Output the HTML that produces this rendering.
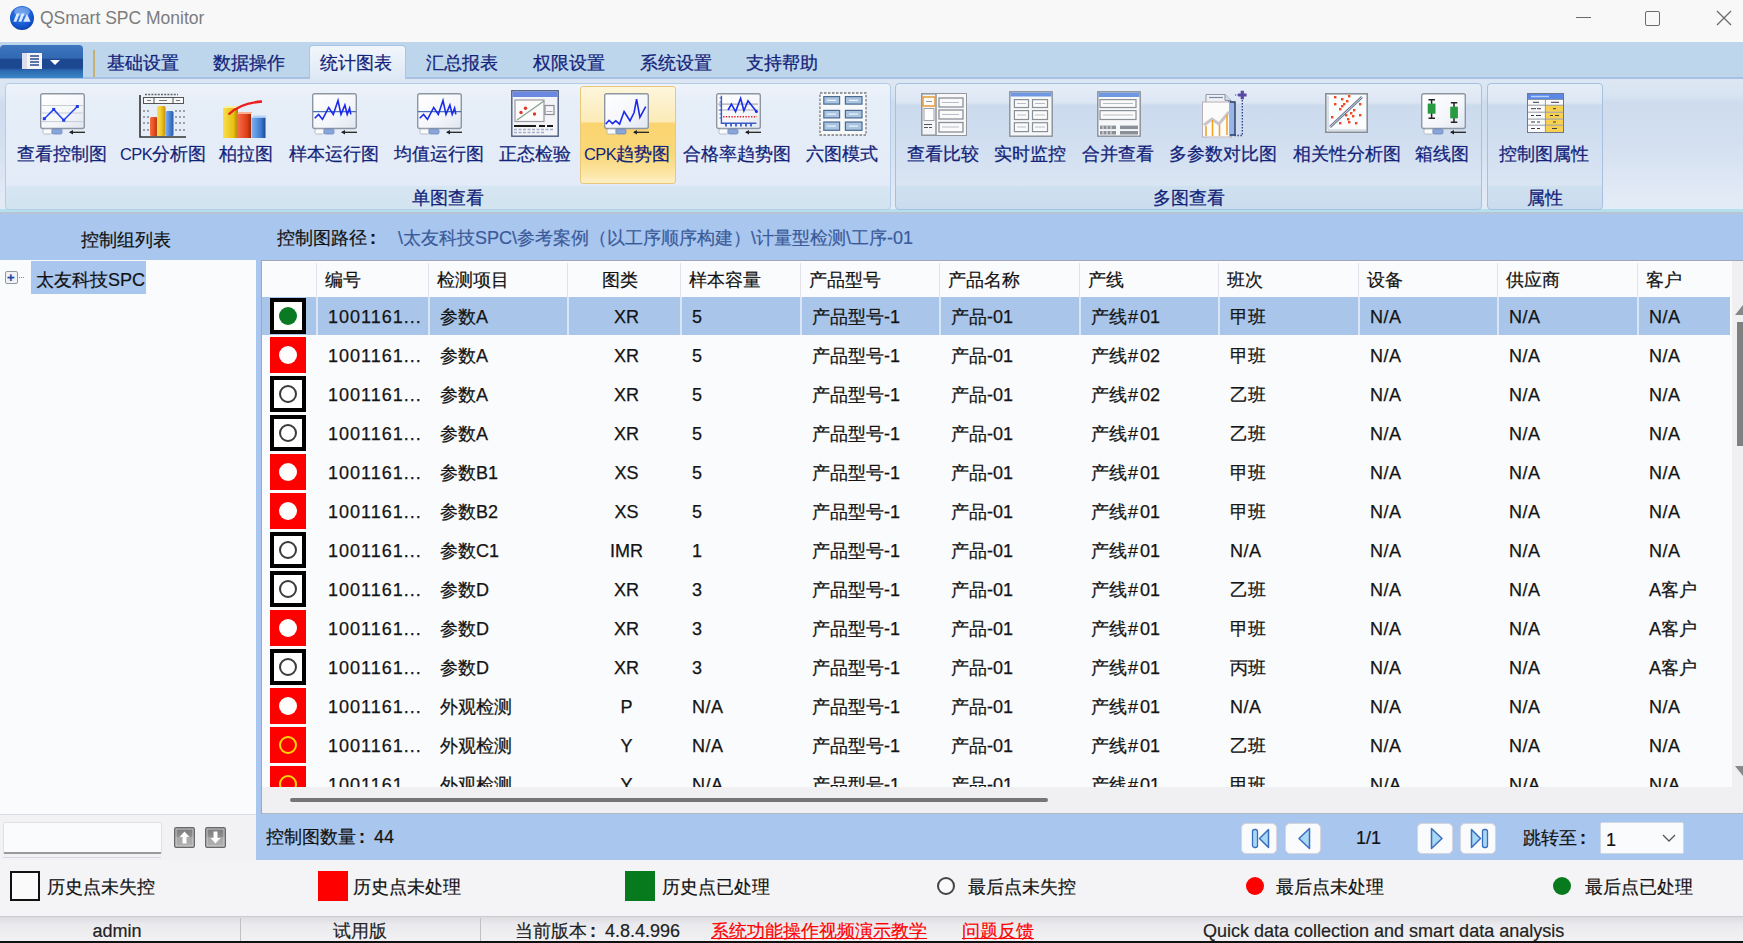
<!DOCTYPE html><html><head><meta charset="utf-8"><title>QSmart SPC Monitor</title><style>
*{box-sizing:border-box}
body{margin:0;width:1743px;height:943px;position:relative;overflow:hidden;font-family:'Liberation Sans', sans-serif;background:#f4f4f6;color:#111}
.a{position:absolute}
.t{position:absolute;white-space:nowrap;line-height:1;-webkit-text-stroke:.2px currentColor}
.rb{color:#13237a;font-size:18px;-webkit-text-stroke:.25px #13237a}
.cell{position:absolute;white-space:nowrap;font-size:18px;line-height:40px;color:#141414;-webkit-text-stroke:.25px currentColor}
</style></head><body>
<div class="a" style="left:0;top:0;width:1743px;height:42px;background:#f8f8f9"></div>
<svg class="a" style="left:9px;top:5px" width="26" height="26" viewBox="0 0 26 26"><defs><radialGradient id="lg" cx=".45" cy=".35" r=".7"><stop offset="0" stop-color="#3a8af0"/><stop offset=".7" stop-color="#1456d0"/><stop offset="1" stop-color="#0a3aa0"/></radialGradient></defs>
<circle cx="13" cy="13" r="12" fill="url(#lg)"/><ellipse cx="13" cy="6.5" rx="8" ry="4.5" fill="#fff" opacity=".3"/><path d="M4.4 16.8L7.6 8.5h3L7.4 16.8zM9.4 16.8L12.6 8.5h3L12.4 16.8zM14.2 16.8L18 8.8l3.5 8z" fill="#eaf2ff" opacity=".92"/></svg>
<div class="t" style="left:40px;top:10px;font-size:17.5px;color:#7c7c7c;-webkit-text-stroke:0">QSmart SPC Monitor</div>
<div class="a" style="left:1576px;top:17px;width:15px;height:1px;background:#6a6a6a"></div>
<div class="a" style="left:1645px;top:11px;width:15px;height:15px;border:1.3px solid #6a6a6a;border-radius:2px"></div>
<svg class="a" style="left:1716px;top:10px" width="16" height="16"><path d="M1 1L15 15M15 1L1 15" stroke="#6a6a6a" stroke-width="1.3"/></svg>
<div class="a" style="left:0;top:42px;width:1743px;height:37px;background:#bed6ec;border-bottom:2px solid #a8c0e4"></div>
<div class="a" style="left:0;top:45px;width:83px;height:33px;border-radius:4px 4px 0 0;background:linear-gradient(#3e76c0 0%,#3268b2 40%,#1c4892 43%,#1c4892 70%,#2a66ae 76%,#3a88c8 100%)"></div>
<svg class="a" style="left:21px;top:52px" width="42" height="18"><rect x="1" y="1" width="20" height="16" fill="#f4f4f4"/><rect x="1" y="1" width="5" height="16" fill="#dde"/><path d="M9 4h9M9 7h9M9 10h9M9 13h9" stroke="#2a4a90" stroke-width="1.5"/><path d="M29 8h10l-5 5z" fill="#fff"/></svg>
<div class="a" style="left:93px;top:50px;width:2px;height:27px;background:#c8b070"></div>
<div class="a" style="left:309px;top:45px;width:97px;height:36px;border:1px solid #a8c4e8;border-bottom:none;border-radius:4px 4px 0 0;background:linear-gradient(#f2f6fb,#dce8f5)"></div>
<div class="t rb" style="left:107px;top:54px;font-size:18px">基础设置</div>
<div class="t rb" style="left:213px;top:54px;font-size:18px">数据操作</div>
<div class="t rb" style="left:320px;top:54px;font-size:18px">统计图表</div>
<div class="t rb" style="left:426px;top:54px;font-size:18px">汇总报表</div>
<div class="t rb" style="left:533px;top:54px;font-size:18px">权限设置</div>
<div class="t rb" style="left:640px;top:54px;font-size:18px">系统设置</div>
<div class="t rb" style="left:746px;top:54px;font-size:18px">支持帮助</div>
<div class="a" style="left:0;top:79px;width:1743px;height:133px;background:linear-gradient(#dde7f3 0%,#d9e4f2 12%,#cedcee 18%,#d4e0f0 50%,#dfe8f5 80%,#e4ecf6 100%)"></div>
<div class="a" style="left:0;top:209px;width:1743px;height:3px;background:#b4e0ee"></div>
<div class="a" style="left:5px;top:83px;width:886px;height:127px;border:1px solid #b4cce8;border-radius:4px;background:linear-gradient(#eef3fa 0%,#e6eef8 14%,#e2ebf7 81%,#d6e6f2 82%,#d2e4f0 100%)"></div>
<div class="t rb" style="left:5px;width:886px;text-align:center;top:189px">单图查看</div>
<div class="a" style="left:895px;top:83px;width:587px;height:127px;border:1px solid #a6c0e0;border-radius:4px;background:linear-gradient(#e6edf7 0%,#dce6f3 15%,#cbdaed 17%,#d0def0 45%,#dae5f3 81%,#cfe0ef 82%,#c9dcee 100%)"></div>
<div class="t rb" style="left:895px;width:587px;text-align:center;top:189px">多图查看</div>
<div class="a" style="left:1487px;top:83px;width:116px;height:127px;border:1px solid #a6c0e0;border-radius:4px;background:linear-gradient(#e6edf7 0%,#dce6f3 15%,#cbdaed 17%,#d0def0 45%,#dae5f3 81%,#cfe0ef 82%,#c9dcee 100%)"></div>
<div class="t rb" style="left:1487px;width:116px;text-align:center;top:189px">属性</div>
<div class="a" style="left:580px;top:86px;width:96px;height:98px;border:1px solid #e8c878;border-radius:3px;background:linear-gradient(#fdf6dc 0%,#fcebb8 36%,#fad470 38%,#fad878 70%,#fce4a0 88%,#fdefc4 100%)"></div>
<svg class="a" style="left:40px;top:93px" width="45" height="42" viewBox="0 0 45 42"><defs><linearGradient id="bd4536" x1="0" y1="0" x2="1" y2="1"><stop offset="0" stop-color="#ffffff"/><stop offset=".6" stop-color="#f4f6fa"/><stop offset="1" stop-color="#dfe6f0"/></linearGradient></defs>
<rect x=".7" y=".7" width="43.6" height="34.8" rx="2" fill="url(#bd4536)" stroke="#8e96a2" stroke-width="1.4"/>
<path d="M2 12.5h41M2 20h41M2 28.6h41" stroke="#c8ccd4" stroke-width="1"/>
<polyline points="4.3,25.7 13.7,16.4 23.7,27.2 37.3,13.5" fill="none" stroke="#2244ee" stroke-width="1.5"/>
<g fill="#1a3af0"><rect x="2.8" y="24.2" width="3" height="3"/><rect x="12.2" y="14.9" width="3" height="3"/><rect x="22.2" y="25.7" width="3" height="3"/><rect x="35.8" y="12" width="3" height="3"/></g><rect x="3" y="36" width="9" height="5" rx="1.5" fill="#fafbfc" stroke="#a8b0b8" stroke-width=".8"/>
<rect x="12" y="36" width="10" height="5" rx="1.5" fill="#8aa6d8" stroke="#6a88c0" stroke-width=".8"/>
<path d="M30 39.3h15" stroke="#222" stroke-width="1.3"/><path d="M29 39.3l4-2.3v4.6z" fill="#222"/></svg>
<div class="t rb" style="left:-18px;width:160px;text-align:center;top:145px">查看控制图</div>
<svg class="a" style="left:139px;top:92px" width="48" height="46" viewBox="0 0 48 46">
<g font-size="0"></g>
<path d="M6 2.5h33" stroke="#666" stroke-width="1.6" stroke-dasharray="2 1.2"/>
<rect x="4.5" y="5.5" width="40" height="6" fill="#f6f7f8" stroke="#555" stroke-width="1"/>
<path d="M15 5.5v6M34 5.5v6" stroke="#555" stroke-width="1"/>
<path d="M8 8.5h4M20 8.5h8M37 8.5h4" stroke="#777" stroke-width="1"/>
<path d="M4 19h8M36 19h10M4 25h8M36 25h10M4 31h8M36 31h10M4 38h8M36 38h10" stroke="#555" stroke-width="1" stroke-dasharray="2 2"/>
<defs><linearGradient id="go" x1="0" x2="1"><stop offset="0" stop-color="#f07040"/><stop offset=".5" stop-color="#e85020"/><stop offset="1" stop-color="#b83010"/></linearGradient>
<linearGradient id="gy" x1="0" x2="1"><stop offset="0" stop-color="#f8e060"/><stop offset=".5" stop-color="#f0c820"/><stop offset="1" stop-color="#c09010"/></linearGradient>
<linearGradient id="gb" x1="0" x2="1"><stop offset="0" stop-color="#80b0f0"/><stop offset=".5" stop-color="#4a86d8"/><stop offset="1" stop-color="#2a5aa8"/></linearGradient></defs>
<rect x="11" y="25" width="7.5" height="19" rx="1.5" fill="url(#go)"/>
<rect x="18" y="14" width="8.5" height="30" rx="1.5" fill="url(#gy)"/>
<rect x="26.5" y="19" width="8" height="25" rx="1.5" fill="url(#gb)"/>
<path d="M1 3v42h46" stroke="#333" stroke-width="1.6" fill="none"/></svg>
<div class="t rb" style="left:83px;width:160px;text-align:center;top:145px"><span style="font-size:16.5px;letter-spacing:-.6px;-webkit-text-stroke:0">CPK</span>分析图</div>
<svg class="a" style="left:222px;top:99px" width="46" height="40" viewBox="0 0 46 40">
<defs><linearGradient id="py" x1="0" x2="1"><stop offset="0" stop-color="#f8e050"/><stop offset=".7" stop-color="#e8c010"/><stop offset="1" stop-color="#a88000"/></linearGradient>
<linearGradient id="pr" x1="0" x2="1"><stop offset="0" stop-color="#f87050"/><stop offset=".7" stop-color="#e04018"/><stop offset="1" stop-color="#a02808"/></linearGradient>
<linearGradient id="pb" x1="0" x2="1"><stop offset="0" stop-color="#80b0f0"/><stop offset=".7" stop-color="#3a78d0"/><stop offset="1" stop-color="#1a4890"/></linearGradient></defs>
<rect x="1" y="9" width="15" height="30" fill="url(#py)"/><path d="M1 9l2-2h14l-1 2z" fill="#f8f0a0"/>
<rect x="15" y="15" width="14" height="24" fill="url(#pr)"/><path d="M15 15l2-2h13l-1 2z" fill="#f8b090"/>
<rect x="29.5" y="18.5" width="14" height="20.5" fill="url(#pb)"/><path d="M29.5 18.5l2-2h13l-1 2z" fill="#b8d4f8"/>
<path d="M6.5 15.5Q18 4 40 2.5" stroke="#ee1c1c" stroke-width="2.4" fill="none"/></svg>
<div class="t rb" style="left:166px;width:160px;text-align:center;top:145px">柏拉图</div>
<svg class="a" style="left:312px;top:93px" width="45" height="42" viewBox="0 0 45 42"><defs><linearGradient id="bd4536" x1="0" y1="0" x2="1" y2="1"><stop offset="0" stop-color="#ffffff"/><stop offset=".6" stop-color="#f4f6fa"/><stop offset="1" stop-color="#dfe6f0"/></linearGradient></defs>
<rect x=".7" y=".7" width="43.6" height="34.8" rx="2" fill="url(#bd4536)" stroke="#8e96a2" stroke-width="1.4"/>
<path d="M1 18.6h43" stroke="#4a70b8" stroke-width="1.4"/>
<polyline points="2.7,25.3 6.6,21.4 10.5,26.4 16.7,14.5 21.3,21.4 26,7.5 29,21.4 32.9,12.1 35.2,21.4 37.6,15.2 38.8,21.4" fill="none" stroke="#1a2ae8" stroke-width="1.6"/><rect x="3" y="36" width="9" height="5" rx="1.5" fill="#fafbfc" stroke="#a8b0b8" stroke-width=".8"/>
<rect x="12" y="36" width="10" height="5" rx="1.5" fill="#8aa6d8" stroke="#6a88c0" stroke-width=".8"/>
<path d="M30 39.3h15" stroke="#222" stroke-width="1.3"/><path d="M29 39.3l4-2.3v4.6z" fill="#222"/></svg>
<div class="t rb" style="left:254px;width:160px;text-align:center;top:145px">样本运行图</div>
<svg class="a" style="left:417px;top:93px" width="45" height="42" viewBox="0 0 45 42"><defs><linearGradient id="bd4536" x1="0" y1="0" x2="1" y2="1"><stop offset="0" stop-color="#ffffff"/><stop offset=".6" stop-color="#f4f6fa"/><stop offset="1" stop-color="#dfe6f0"/></linearGradient></defs>
<rect x=".7" y=".7" width="43.6" height="34.8" rx="2" fill="url(#bd4536)" stroke="#8e96a2" stroke-width="1.4"/>
<path d="M1 18.6h43" stroke="#4a70b8" stroke-width="1.4"/>
<polyline points="2.7,25.3 6.6,21.4 10.5,26.4 16.7,14.5 21.3,21.4 26,7.5 29,21.4 32.9,12.1 35.2,21.4 37.6,15.2 38.8,21.4" fill="none" stroke="#1a2ae8" stroke-width="1.6"/><rect x="3" y="36" width="9" height="5" rx="1.5" fill="#fafbfc" stroke="#a8b0b8" stroke-width=".8"/>
<rect x="12" y="36" width="10" height="5" rx="1.5" fill="#8aa6d8" stroke="#6a88c0" stroke-width=".8"/>
<path d="M30 39.3h15" stroke="#222" stroke-width="1.3"/><path d="M29 39.3l4-2.3v4.6z" fill="#222"/></svg>
<div class="t rb" style="left:359px;width:160px;text-align:center;top:145px">均值运行图</div>
<svg class="a" style="left:511px;top:90px" width="48" height="47" viewBox="0 0 48 47">
<rect x=".8" y=".8" width="46.4" height="45.4" fill="#f2f4f8" stroke="#4a5a7a" stroke-width="1.4"/>
<rect x="1.5" y="1.5" width="45" height="5.5" fill="#6a88e0"/>
<rect x="3" y="9" width="34" height="40" fill="none"/>
<rect x="4" y="10" width="29" height="21.5" fill="#fbfbfc" stroke="#9a9aa4" stroke-width="1.2"/>
<path d="M6 30L33 11" stroke="#8aa090" stroke-width="1.3"/>
<g fill="#e03828"><circle cx="10" cy="22.5" r="1.7"/><circle cx="14.5" cy="18.3" r="1.7"/><circle cx="23.5" cy="24" r="1.7"/></g>
<rect x="34" y="15.5" width="9" height="9" fill="#f6f6f8" stroke="#8a8a94" stroke-width="1.2"/>
<path d="M35.5 21.5h6" stroke="#aab" stroke-width="1"/>
<path d="M3 36h22M28 36h6M36 36h6" stroke="#1a1a1a" stroke-width="1.8"/>
<path d="M3 39.5h39M3 42.5h30" stroke="#a8b0c8" stroke-width="1.3" stroke-dasharray="3 1.5"/></svg>
<div class="t rb" style="left:455px;width:160px;text-align:center;top:145px">正态检验</div>
<svg class="a" style="left:604px;top:93px" width="45" height="42" viewBox="0 0 45 42"><defs><linearGradient id="bd4536" x1="0" y1="0" x2="1" y2="1"><stop offset="0" stop-color="#ffffff"/><stop offset=".6" stop-color="#f4f6fa"/><stop offset="1" stop-color="#dfe6f0"/></linearGradient></defs>
<rect x=".7" y=".7" width="43.6" height="34.8" rx="2" fill="url(#bd4536)" stroke="#8e96a2" stroke-width="1.4"/>
<polyline points="1.8,31.1 5.1,27.3 8.5,30.6 11.8,27.8 15.6,31.1 20.1,18.6 26,27.8 30.1,19.5 32.6,6.1 35.9,24.4 41.7,13.6" fill="none" stroke="#1a2ae8" stroke-width="1.6"/><rect x="3" y="36" width="9" height="5" rx="1.5" fill="#fafbfc" stroke="#a8b0b8" stroke-width=".8"/>
<rect x="12" y="36" width="10" height="5" rx="1.5" fill="#8aa6d8" stroke="#6a88c0" stroke-width=".8"/>
<path d="M30 39.3h15" stroke="#222" stroke-width="1.3"/><path d="M29 39.3l4-2.3v4.6z" fill="#222"/></svg>
<div class="t rb" style="left:547px;width:160px;text-align:center;top:145px"><span style="font-size:16.5px;letter-spacing:-.6px;-webkit-text-stroke:0">CPK</span>趋势图</div>
<svg class="a" style="left:716px;top:93px" width="45" height="42" viewBox="0 0 45 42"><defs><linearGradient id="bd4536" x1="0" y1="0" x2="1" y2="1"><stop offset="0" stop-color="#ffffff"/><stop offset=".6" stop-color="#f4f6fa"/><stop offset="1" stop-color="#dfe6f0"/></linearGradient></defs>
<rect x=".7" y=".7" width="43.6" height="34.8" rx="2" fill="url(#bd4536)" stroke="#8e96a2" stroke-width="1.4"/>
<path d="M2 11.1h40M2 17h40" stroke="#a8acb4" stroke-width="1.2"/>
<path d="M5.4 2.8v27.5h35" stroke="#3a5ac8" stroke-width="1.4" fill="none"/>
<path d="M3.5 5h2M3.5 9h2M3.5 13h2M3.5 17h2M3.5 21h2M3.5 25h2" stroke="#3a5ac8" stroke-width="1"/>
<polyline points="12.1,17 15.4,11.1 19.6,18.6 24.6,5.3 27.9,17.8 32,7.8 40.4,18.6" fill="none" stroke="#1a2ae8" stroke-width="1.6"/>
<circle cx="40.4" cy="18.6" r="1.5" fill="#1a2ae8"/>
<path d="M7 23.8h34" stroke="#ee2020" stroke-width="1.6" stroke-dasharray="1.4 1.4"/>
<path d="M10 30.5v3M15 30.5v3M20 30.5v3M25 30.5v3M30 30.5v3M35 30.5v3" stroke="#3a5ac8" stroke-width="1.8"/><rect x="3" y="36" width="9" height="5" rx="1.5" fill="#fafbfc" stroke="#a8b0b8" stroke-width=".8"/>
<rect x="12" y="36" width="10" height="5" rx="1.5" fill="#8aa6d8" stroke="#6a88c0" stroke-width=".8"/>
<path d="M30 39.3h15" stroke="#222" stroke-width="1.3"/><path d="M29 39.3l4-2.3v4.6z" fill="#222"/></svg>
<div class="t rb" style="left:657px;width:160px;text-align:center;top:145px">合格率趋势图</div>
<svg class="a" style="left:819px;top:92px" width="48" height="44" viewBox="0 0 48 44">
<rect x="1" y="1" width="46" height="42" fill="#f6f8fa" stroke="#7a7a7a" stroke-width="1.3" stroke-dasharray="2.5 1.5"/>
<g fill="#a8c4e0" stroke="#4a6a90" stroke-width="1.2">
<rect x="4.8" y="4.6" width="15.8" height="7.5"/><rect x="26.4" y="4.6" width="16.6" height="7.5"/>
<rect x="4.8" y="18.4" width="15.8" height="7.5"/><rect x="26.4" y="18.4" width="16.6" height="7.5"/>
<rect x="4.8" y="30" width="15.8" height="8.3"/><rect x="26.4" y="30" width="16.6" height="8.3"/></g>
<g stroke="#fff" stroke-width="1"><path d="M8 8.3h9M30 8.3h9M8 22.1h9M30 22.1h9M8 34.1h9M30 34.1h9"/></g></svg>
<div class="t rb" style="left:762px;width:160px;text-align:center;top:145px">六图模式</div>
<svg class="a" style="left:921px;top:93px" width="46" height="43" viewBox="0 0 46 43">
<rect x=".8" y=".8" width="44.4" height="41.4" fill="#f4f5f6" stroke="#8a9098" stroke-width="1.4"/>
<rect x="15" y="1" width="30" height="41" fill="#f8f8f9"/>
<path d="M15 1v41" stroke="#8a9098" stroke-width="1.4"/>
<rect x="2" y="4" width="12" height="9" fill="#fcfcfc" stroke="#e8a040" stroke-width="1.6"/>
<path d="M5 8.5h6" stroke="#999" stroke-width="1"/>
<rect x="3" y="15.5" width="10" height="12" fill="#fdfdfd" stroke="#a0a0a8" stroke-width="1"/>
<path d="M3 31.5h8M3 34.5h4M8 34.5h3" stroke="#555" stroke-width="1.2"/>
<g fill="#fafafa" stroke="#8a9098" stroke-width="1.3"><rect x="18" y="5" width="24" height="9"/><rect x="18" y="17" width="24" height="9"/><rect x="18" y="29.5" width="24" height="9.5"/></g>
<path d="M21 9.5h17M21 21.5h17M21 34h17" stroke="#b8bcc4" stroke-width="1"/></svg>
<div class="t rb" style="left:863px;width:160px;text-align:center;top:145px">查看比较</div>
<svg class="a" style="left:1009px;top:91px" width="44" height="46" viewBox="0 0 44 46">
<rect x=".8" y=".8" width="42.4" height="44.4" fill="#f6f7f8" stroke="#8a9098" stroke-width="1.4"/>
<rect x="1.5" y="1.5" width="41" height="4" fill="#7098e0"/>
<g fill="#fafafa" stroke="#8a9098" stroke-width="1.2">
<rect x="5.4" y="8.6" width="14.1" height="7.9"/><rect x="23.5" y="8.6" width="15" height="7.9"/>
<rect x="5.4" y="19.6" width="14.1" height="8.9"/><rect x="23.5" y="19.6" width="15" height="8.9"/>
<rect x="5.4" y="31.7" width="14.1" height="8.9"/><rect x="23.5" y="31.7" width="15" height="8.9"/></g>
<path d="M8 12.5h9M26 12.5h10M8 24h9M26 24h10M8 36h9M26 36h10" stroke="#b8bcc4" stroke-width="1"/></svg>
<div class="t rb" style="left:950px;width:160px;text-align:center;top:145px">实时监控</div>
<svg class="a" style="left:1097px;top:91px" width="44" height="46" viewBox="0 0 44 46">
<rect x=".8" y=".8" width="42.4" height="44.4" fill="#f6f7f8" stroke="#8a9098" stroke-width="1.4"/>
<rect x="1.5" y="1.5" width="41" height="4.5" fill="#7098e0"/>
<g fill="#fafafa" stroke="#8a9098" stroke-width="1.2"><rect x="3" y="8.6" width="36" height="7.9"/><rect x="3" y="19.6" width="36" height="8.9"/></g>
<path d="M6 12.5h30M6 24h30" stroke="#b8bcc4" stroke-width="1"/>
<g fill="#8a9098"><rect x="3" y="34.6" width="16" height="3.5"/><rect x="3" y="40" width="16" height="3.5"/><rect x="23" y="34.6" width="18" height="3.5"/><rect x="23" y="40" width="18" height="3.5"/></g>
<path d="M6 34.6v9M10 34.6v9M14 34.6v9" stroke="#e8e8ec" stroke-width="1"/></svg>
<div class="t rb" style="left:1038px;width:160px;text-align:center;top:145px">合并查看</div>
<svg class="a" style="left:1200px;top:90px" width="48" height="48" viewBox="0 0 48 48">
<path d="M6 4.5h19l6 6v38H6z" fill="#eef0f4" stroke="#9098a8" stroke-width="1"/>
<path d="M25 4.5v6h6" fill="#d0d8e8" stroke="#8890a0" stroke-width="1"/>
<path d="M28 12h7v33h-7" fill="#98b4e8" stroke="#2a3a60" stroke-width="1.4"/>
<rect x="2.5" y="12" width="27" height="35" fill="#fbfbfc" stroke="#b8b0b8" stroke-width="1"/>
<path d="M9 7.5h14" stroke="#7a8aa0" stroke-width="1.2"/>
<path d="M4 35l8-6 7 5 10-12" stroke="#c8c4c8" stroke-width="3" fill="none"/>
<path d="M6 36v10M12.5 30v16M19.5 35v11M27 25v20" stroke="#f0a020" stroke-width="1.5"/>
<path d="M42.3 10v35.5h-9" stroke="#2a3a8a" stroke-width="1.3" stroke-dasharray="1.4 1.6" fill="none"/>
<path d="M35 5h3" stroke="#2a3a8a" stroke-width="1.1" stroke-dasharray="1.2 1.2"/>
<path d="M42.3 0.8v8.5M38 5h8.6" stroke="#5a48a8" stroke-width="3.2"/></svg>
<div class="t rb" style="left:1143px;width:160px;text-align:center;top:145px">多参数对比图</div>
<svg class="a" style="left:1325px;top:93px" width="43" height="40" viewBox="0 0 43 40">
<rect x=".8" y=".8" width="41.4" height="38.4" fill="#fbfcfd" stroke="#8a9098" stroke-width="1.6"/>
<path d="M3 3v34h38" stroke="#b8c4d8" stroke-width="1" fill="none"/>
<path d="M5 34L37 4" stroke="#6a7890" stroke-width="2.6"/><path d="M5 34L37 4" stroke="#e8ecf4" stroke-width=".8"/>
<g fill="#f04820"><rect x="9" y="3" width="2.4" height="2.4"/><rect x="16" y="5" width="2.4" height="2.4"/><rect x="23" y="2" width="2.4" height="2.4"/>
<rect x="9" y="10" width="2.4" height="2.4"/><rect x="14" y="15" width="2.4" height="2.4"/><rect x="18" y="10" width="2.4" height="2.4"/><rect x="21" y="7" width="2.4" height="2.4"/>
<rect x="16" y="12" width="2.4" height="2.4"/><rect x="34" y="10" width="2.4" height="2.4"/><rect x="6" y="23" width="2.4" height="2.4"/><rect x="20" y="21" width="2.4" height="2.4"/>
<rect x="25" y="19" width="2.4" height="2.4"/><rect x="28" y="16" width="2.4" height="2.4"/><rect x="22" y="25" width="2.4" height="2.4"/><rect x="34" y="21" width="2.4" height="2.4"/>
<rect x="14" y="29" width="2.4" height="2.4"/><rect x="23" y="28" width="2.4" height="2.4"/><rect x="30" y="29" width="2.4" height="2.4"/><rect x="27" y="22" width="2.4" height="2.4"/></g></svg>
<div class="t rb" style="left:1267px;width:160px;text-align:center;top:145px">相关性分析图</div>
<svg class="a" style="left:1421px;top:93px" width="45" height="42" viewBox="0 0 45 42"><defs><linearGradient id="bd4536" x1="0" y1="0" x2="1" y2="1"><stop offset="0" stop-color="#ffffff"/><stop offset=".6" stop-color="#f4f6fa"/><stop offset="1" stop-color="#dfe6f0"/></linearGradient></defs>
<rect x=".7" y=".7" width="43.6" height="34.8" rx="2" fill="url(#bd4536)" stroke="#8e96a2" stroke-width="1.4"/>
<path d="M7.5 6.7h6.5M10.6 6.7v18.6M7.5 25.3h6.5M29.8 9.8h6.5M33 9.8v19.4M29.8 29.2h6.5" stroke="#222" stroke-width="1.5"/>
<rect x="6.7" y="10.6" width="7.8" height="10.1" fill="#2a9a40"/>
<rect x="29.2" y="13.7" width="7.7" height="11.6" fill="#2a9a40"/><rect x="3" y="36" width="9" height="5" rx="1.5" fill="#fafbfc" stroke="#a8b0b8" stroke-width=".8"/>
<rect x="12" y="36" width="10" height="5" rx="1.5" fill="#8aa6d8" stroke="#6a88c0" stroke-width=".8"/>
<path d="M30 39.3h15" stroke="#222" stroke-width="1.3"/><path d="M29 39.3l4-2.3v4.6z" fill="#222"/></svg>
<div class="t rb" style="left:1362px;width:160px;text-align:center;top:145px">箱线图</div>
<svg class="a" style="left:1527px;top:93px" width="37" height="40" viewBox="0 0 37 40">
<rect x=".5" y=".5" width="36" height="39" fill="#fbfbfc" stroke="#707888" stroke-width="1"/>
<rect x="1" y="1" width="35" height="5.5" fill="#5a88e8"/><path d="M4 3.5h18" stroke="#b8d0f8" stroke-width="1.5"/>
<g fill="#f8d050"><rect x="18.4" y="12.2" width="17.6" height="6.6"/><rect x="18.4" y="19.4" width="17.6" height="6.4"/><rect x="18.4" y="26.3" width="17.6" height="5.8"/><rect x="18.4" y="32.6" width="17.6" height="6.4"/></g>
<path d="M1 6.5h35M1 12.2h35M1 19.2h35M1 26.1h35M1 32.2h35M18.4 6.5v33" stroke="#8a909a" stroke-width=".9"/>
<g stroke="#3a3a4a" stroke-width="1"><path d="M6 9.3h6M24 9.3h8M4 15.7h5M10 15.7h4M4 22.5h3M9 22.5h5M4 29h4M10 29h3M4 35.5h4M10 35.5h3M26 15.7h3M23 22.5h3M28 22.5h4M26 29h3M25 35.5h5"/></g></svg>
<div class="t rb" style="left:1464px;width:160px;text-align:center;top:145px">控制图属性</div>
<div class="a" style="left:0;top:212px;width:1743px;height:2px;background:#b8c4d4"></div>
<div class="a" style="left:0;top:214px;width:1743px;height:46px;background:#a9c6ee"></div>
<div class="t" style="left:0;width:252px;text-align:center;top:231px;font-size:18px;color:#111">控制组列表</div>
<div class="t" style="left:277px;top:229px;font-size:18px;color:#111">控制图路径<span style="display:inline-block;width:18px;padding-left:3px;font-weight:bold">:</span></div>
<div class="t" style="left:398px;top:229px;font-size:18px;color:#3a5a9a">\太友科技SPC\参考案例（以工序顺序构建）\计量型检测\工序-01</div>
<div class="a" style="left:0;top:260px;width:256px;height:554px;background:#fafbfc"></div>
<div class="a" style="left:256px;top:260px;width:6px;height:600px;background:#a9c6ee"></div>
<div class="a" style="left:5px;top:271px;width:13px;height:13px;border:1px solid #909aa0;border-radius:2px;background:#f2f2f4"></div>
<div class="t" style="left:7px;top:271px;font-size:13px;color:#2244aa;font-weight:bold">+</div>
<div class="a" style="left:19px;top:277px;width:5px;border-top:1px dotted #888"></div>
<div class="a" style="left:31px;top:261px;width:115px;height:33px;background:#a9c6ee"></div>
<div class="t" style="left:36px;top:271px;font-size:18px;color:#111">太友科技SPC</div>
<div class="a" style="left:261px;top:260px;width:1482px;height:554px;background:#f0f0f2;border-left:1px solid #a0a8b4;border-top:1px solid #a0a8b4"></div>
<div class="a" style="left:262px;top:261px;width:1470px;height:526px;background:#fafbfc;overflow:hidden">
<div class="t" style="left:63px;top:10px;font-size:18px;color:#111">编号</div>
<div class="a" style="left:54px;top:2px;width:1px;height:34px;background:#e4e0ec"></div>
<div class="t" style="left:175px;top:10px;font-size:18px;color:#111">检测项目</div>
<div class="a" style="left:166px;top:2px;width:1px;height:34px;background:#e4e0ec"></div>
<div class="t" style="left:301px;width:113px;text-align:center;top:10px;font-size:18px;color:#111">图类</div>
<div class="a" style="left:305px;top:2px;width:1px;height:34px;background:#e4e0ec"></div>
<div class="t" style="left:427px;top:10px;font-size:18px;color:#111">样本容量</div>
<div class="a" style="left:418px;top:2px;width:1px;height:34px;background:#e4e0ec"></div>
<div class="t" style="left:547px;top:10px;font-size:18px;color:#111">产品型号</div>
<div class="a" style="left:538px;top:2px;width:1px;height:34px;background:#e4e0ec"></div>
<div class="t" style="left:686px;top:10px;font-size:18px;color:#111">产品名称</div>
<div class="a" style="left:677px;top:2px;width:1px;height:34px;background:#e4e0ec"></div>
<div class="t" style="left:826px;top:10px;font-size:18px;color:#111">产线</div>
<div class="a" style="left:817px;top:2px;width:1px;height:34px;background:#e4e0ec"></div>
<div class="t" style="left:965px;top:10px;font-size:18px;color:#111">班次</div>
<div class="a" style="left:956px;top:2px;width:1px;height:34px;background:#e4e0ec"></div>
<div class="t" style="left:1105px;top:10px;font-size:18px;color:#111">设备</div>
<div class="a" style="left:1096px;top:2px;width:1px;height:34px;background:#e4e0ec"></div>
<div class="t" style="left:1244px;top:10px;font-size:18px;color:#111">供应商</div>
<div class="a" style="left:1235px;top:2px;width:1px;height:34px;background:#e4e0ec"></div>
<div class="t" style="left:1384px;top:10px;font-size:18px;color:#111">客户</div>
<div class="a" style="left:1375px;top:2px;width:1px;height:34px;background:#e4e0ec"></div>
<div class="a" style="left:0;top:36px;width:1468px;height:38px;background:#a9c6ea"></div>
<div class="a" style="left:54px;top:36px;width:2px;height:38px;background:#f0f4fa;opacity:.7"></div>
<div class="a" style="left:166px;top:36px;width:2px;height:38px;background:#f0f4fa;opacity:.7"></div>
<div class="a" style="left:305px;top:36px;width:2px;height:38px;background:#f0f4fa;opacity:.7"></div>
<div class="a" style="left:418px;top:36px;width:2px;height:38px;background:#f0f4fa;opacity:.7"></div>
<div class="a" style="left:538px;top:36px;width:2px;height:38px;background:#f0f4fa;opacity:.7"></div>
<div class="a" style="left:677px;top:36px;width:2px;height:38px;background:#f0f4fa;opacity:.7"></div>
<div class="a" style="left:817px;top:36px;width:2px;height:38px;background:#f0f4fa;opacity:.7"></div>
<div class="a" style="left:956px;top:36px;width:2px;height:38px;background:#f0f4fa;opacity:.7"></div>
<div class="a" style="left:1096px;top:36px;width:2px;height:38px;background:#f0f4fa;opacity:.7"></div>
<div class="a" style="left:1235px;top:36px;width:2px;height:38px;background:#f0f4fa;opacity:.7"></div>
<div class="a" style="left:1375px;top:36px;width:2px;height:38px;background:#f0f4fa;opacity:.7"></div>
<div class="a" style="left:8px;top:37px;width:36px;height:36px;border:4px solid #000;background:#fff"></div><div class="a" style="left:17px;top:46px;width:18px;height:18px;border-radius:50%;background:#0a7a22"></div>
<div class="cell" style="left:66px;top:36px;letter-spacing:1px;">1001161...</div>
<div class="cell" style="left:178px;top:36px;">参数A</div>
<div class="cell" style="left:308px;width:113px;text-align:center;top:36px">XR</div>
<div class="cell" style="left:430px;top:36px;">5</div>
<div class="cell" style="left:550px;top:36px;">产品型号-1</div>
<div class="cell" style="left:689px;top:36px;">产品-01</div>
<div class="cell" style="left:829px;top:36px;">产线<span style="padding:0 2px 0 1px">#</span>01</div>
<div class="cell" style="left:968px;top:36px;">甲班</div>
<div class="cell" style="left:1108px;top:36px;letter-spacing:.5px;">N/A</div>
<div class="cell" style="left:1247px;top:36px;letter-spacing:.5px;">N/A</div>
<div class="cell" style="left:1387px;top:36px;letter-spacing:.5px;">N/A</div>
<div class="a" style="left:8px;top:76px;width:36px;height:36px;background:#ff0000"></div><div class="a" style="left:17px;top:85px;width:18px;height:18px;border-radius:50%;background:#fff"></div>
<div class="cell" style="left:66px;top:75px;letter-spacing:1px;">1001161...</div>
<div class="cell" style="left:178px;top:75px;">参数A</div>
<div class="cell" style="left:308px;width:113px;text-align:center;top:75px">XR</div>
<div class="cell" style="left:430px;top:75px;">5</div>
<div class="cell" style="left:550px;top:75px;">产品型号-1</div>
<div class="cell" style="left:689px;top:75px;">产品-01</div>
<div class="cell" style="left:829px;top:75px;">产线<span style="padding:0 2px 0 1px">#</span>02</div>
<div class="cell" style="left:968px;top:75px;">甲班</div>
<div class="cell" style="left:1108px;top:75px;letter-spacing:.5px;">N/A</div>
<div class="cell" style="left:1247px;top:75px;letter-spacing:.5px;">N/A</div>
<div class="cell" style="left:1387px;top:75px;letter-spacing:.5px;">N/A</div>
<div class="a" style="left:8px;top:115px;width:36px;height:36px;border:4px solid #000;background:#fff"></div><div class="a" style="left:17px;top:124px;width:18px;height:18px;border-radius:50%;border:2px solid #3a3a3a"></div>
<div class="cell" style="left:66px;top:114px;letter-spacing:1px;">1001161...</div>
<div class="cell" style="left:178px;top:114px;">参数A</div>
<div class="cell" style="left:308px;width:113px;text-align:center;top:114px">XR</div>
<div class="cell" style="left:430px;top:114px;">5</div>
<div class="cell" style="left:550px;top:114px;">产品型号-1</div>
<div class="cell" style="left:689px;top:114px;">产品-01</div>
<div class="cell" style="left:829px;top:114px;">产线<span style="padding:0 2px 0 1px">#</span>02</div>
<div class="cell" style="left:968px;top:114px;">乙班</div>
<div class="cell" style="left:1108px;top:114px;letter-spacing:.5px;">N/A</div>
<div class="cell" style="left:1247px;top:114px;letter-spacing:.5px;">N/A</div>
<div class="cell" style="left:1387px;top:114px;letter-spacing:.5px;">N/A</div>
<div class="a" style="left:8px;top:154px;width:36px;height:36px;border:4px solid #000;background:#fff"></div><div class="a" style="left:17px;top:163px;width:18px;height:18px;border-radius:50%;border:2px solid #3a3a3a"></div>
<div class="cell" style="left:66px;top:153px;letter-spacing:1px;">1001161...</div>
<div class="cell" style="left:178px;top:153px;">参数A</div>
<div class="cell" style="left:308px;width:113px;text-align:center;top:153px">XR</div>
<div class="cell" style="left:430px;top:153px;">5</div>
<div class="cell" style="left:550px;top:153px;">产品型号-1</div>
<div class="cell" style="left:689px;top:153px;">产品-01</div>
<div class="cell" style="left:829px;top:153px;">产线<span style="padding:0 2px 0 1px">#</span>01</div>
<div class="cell" style="left:968px;top:153px;">乙班</div>
<div class="cell" style="left:1108px;top:153px;letter-spacing:.5px;">N/A</div>
<div class="cell" style="left:1247px;top:153px;letter-spacing:.5px;">N/A</div>
<div class="cell" style="left:1387px;top:153px;letter-spacing:.5px;">N/A</div>
<div class="a" style="left:8px;top:193px;width:36px;height:36px;background:#ff0000"></div><div class="a" style="left:17px;top:202px;width:18px;height:18px;border-radius:50%;background:#fff"></div>
<div class="cell" style="left:66px;top:192px;letter-spacing:1px;">1001161...</div>
<div class="cell" style="left:178px;top:192px;">参数B1</div>
<div class="cell" style="left:308px;width:113px;text-align:center;top:192px">XS</div>
<div class="cell" style="left:430px;top:192px;">5</div>
<div class="cell" style="left:550px;top:192px;">产品型号-1</div>
<div class="cell" style="left:689px;top:192px;">产品-01</div>
<div class="cell" style="left:829px;top:192px;">产线<span style="padding:0 2px 0 1px">#</span>01</div>
<div class="cell" style="left:968px;top:192px;">甲班</div>
<div class="cell" style="left:1108px;top:192px;letter-spacing:.5px;">N/A</div>
<div class="cell" style="left:1247px;top:192px;letter-spacing:.5px;">N/A</div>
<div class="cell" style="left:1387px;top:192px;letter-spacing:.5px;">N/A</div>
<div class="a" style="left:8px;top:232px;width:36px;height:36px;background:#ff0000"></div><div class="a" style="left:17px;top:241px;width:18px;height:18px;border-radius:50%;background:#fff"></div>
<div class="cell" style="left:66px;top:231px;letter-spacing:1px;">1001161...</div>
<div class="cell" style="left:178px;top:231px;">参数B2</div>
<div class="cell" style="left:308px;width:113px;text-align:center;top:231px">XS</div>
<div class="cell" style="left:430px;top:231px;">5</div>
<div class="cell" style="left:550px;top:231px;">产品型号-1</div>
<div class="cell" style="left:689px;top:231px;">产品-01</div>
<div class="cell" style="left:829px;top:231px;">产线<span style="padding:0 2px 0 1px">#</span>01</div>
<div class="cell" style="left:968px;top:231px;">甲班</div>
<div class="cell" style="left:1108px;top:231px;letter-spacing:.5px;">N/A</div>
<div class="cell" style="left:1247px;top:231px;letter-spacing:.5px;">N/A</div>
<div class="cell" style="left:1387px;top:231px;letter-spacing:.5px;">N/A</div>
<div class="a" style="left:8px;top:271px;width:36px;height:36px;border:4px solid #000;background:#fff"></div><div class="a" style="left:17px;top:280px;width:18px;height:18px;border-radius:50%;border:2px solid #3a3a3a"></div>
<div class="cell" style="left:66px;top:270px;letter-spacing:1px;">1001161...</div>
<div class="cell" style="left:178px;top:270px;">参数C1</div>
<div class="cell" style="left:308px;width:113px;text-align:center;top:270px">IMR</div>
<div class="cell" style="left:430px;top:270px;">1</div>
<div class="cell" style="left:550px;top:270px;">产品型号-1</div>
<div class="cell" style="left:689px;top:270px;">产品-01</div>
<div class="cell" style="left:829px;top:270px;">产线<span style="padding:0 2px 0 1px">#</span>01</div>
<div class="cell" style="left:968px;top:270px;letter-spacing:.5px;">N/A</div>
<div class="cell" style="left:1108px;top:270px;letter-spacing:.5px;">N/A</div>
<div class="cell" style="left:1247px;top:270px;letter-spacing:.5px;">N/A</div>
<div class="cell" style="left:1387px;top:270px;letter-spacing:.5px;">N/A</div>
<div class="a" style="left:8px;top:310px;width:36px;height:36px;border:4px solid #000;background:#fff"></div><div class="a" style="left:17px;top:319px;width:18px;height:18px;border-radius:50%;border:2px solid #3a3a3a"></div>
<div class="cell" style="left:66px;top:309px;letter-spacing:1px;">1001161...</div>
<div class="cell" style="left:178px;top:309px;">参数D</div>
<div class="cell" style="left:308px;width:113px;text-align:center;top:309px">XR</div>
<div class="cell" style="left:430px;top:309px;">3</div>
<div class="cell" style="left:550px;top:309px;">产品型号-1</div>
<div class="cell" style="left:689px;top:309px;">产品-01</div>
<div class="cell" style="left:829px;top:309px;">产线<span style="padding:0 2px 0 1px">#</span>01</div>
<div class="cell" style="left:968px;top:309px;">乙班</div>
<div class="cell" style="left:1108px;top:309px;letter-spacing:.5px;">N/A</div>
<div class="cell" style="left:1247px;top:309px;letter-spacing:.5px;">N/A</div>
<div class="cell" style="left:1387px;top:309px;">A客户</div>
<div class="a" style="left:8px;top:349px;width:36px;height:36px;background:#ff0000"></div><div class="a" style="left:17px;top:358px;width:18px;height:18px;border-radius:50%;background:#fff"></div>
<div class="cell" style="left:66px;top:348px;letter-spacing:1px;">1001161...</div>
<div class="cell" style="left:178px;top:348px;">参数D</div>
<div class="cell" style="left:308px;width:113px;text-align:center;top:348px">XR</div>
<div class="cell" style="left:430px;top:348px;">3</div>
<div class="cell" style="left:550px;top:348px;">产品型号-1</div>
<div class="cell" style="left:689px;top:348px;">产品-01</div>
<div class="cell" style="left:829px;top:348px;">产线<span style="padding:0 2px 0 1px">#</span>01</div>
<div class="cell" style="left:968px;top:348px;">甲班</div>
<div class="cell" style="left:1108px;top:348px;letter-spacing:.5px;">N/A</div>
<div class="cell" style="left:1247px;top:348px;letter-spacing:.5px;">N/A</div>
<div class="cell" style="left:1387px;top:348px;">A客户</div>
<div class="a" style="left:8px;top:388px;width:36px;height:36px;border:4px solid #000;background:#fff"></div><div class="a" style="left:17px;top:397px;width:18px;height:18px;border-radius:50%;border:2px solid #3a3a3a"></div>
<div class="cell" style="left:66px;top:387px;letter-spacing:1px;">1001161...</div>
<div class="cell" style="left:178px;top:387px;">参数D</div>
<div class="cell" style="left:308px;width:113px;text-align:center;top:387px">XR</div>
<div class="cell" style="left:430px;top:387px;">3</div>
<div class="cell" style="left:550px;top:387px;">产品型号-1</div>
<div class="cell" style="left:689px;top:387px;">产品-01</div>
<div class="cell" style="left:829px;top:387px;">产线<span style="padding:0 2px 0 1px">#</span>01</div>
<div class="cell" style="left:968px;top:387px;">丙班</div>
<div class="cell" style="left:1108px;top:387px;letter-spacing:.5px;">N/A</div>
<div class="cell" style="left:1247px;top:387px;letter-spacing:.5px;">N/A</div>
<div class="cell" style="left:1387px;top:387px;">A客户</div>
<div class="a" style="left:8px;top:427px;width:36px;height:36px;background:#ff0000"></div><div class="a" style="left:17px;top:436px;width:18px;height:18px;border-radius:50%;background:#fff"></div>
<div class="cell" style="left:66px;top:426px;letter-spacing:1px;">1001161...</div>
<div class="cell" style="left:178px;top:426px;">外观检测</div>
<div class="cell" style="left:308px;width:113px;text-align:center;top:426px">P</div>
<div class="cell" style="left:430px;top:426px;letter-spacing:.5px;">N/A</div>
<div class="cell" style="left:550px;top:426px;">产品型号-1</div>
<div class="cell" style="left:689px;top:426px;">产品-01</div>
<div class="cell" style="left:829px;top:426px;">产线<span style="padding:0 2px 0 1px">#</span>01</div>
<div class="cell" style="left:968px;top:426px;letter-spacing:.5px;">N/A</div>
<div class="cell" style="left:1108px;top:426px;letter-spacing:.5px;">N/A</div>
<div class="cell" style="left:1247px;top:426px;letter-spacing:.5px;">N/A</div>
<div class="cell" style="left:1387px;top:426px;letter-spacing:.5px;">N/A</div>
<div class="a" style="left:8px;top:466px;width:36px;height:36px;background:#ff0000"></div><div class="a" style="left:17px;top:475px;width:18px;height:18px;border-radius:50%;border:2px solid #ffd800"></div>
<div class="cell" style="left:66px;top:465px;letter-spacing:1px;">1001161...</div>
<div class="cell" style="left:178px;top:465px;">外观检测</div>
<div class="cell" style="left:308px;width:113px;text-align:center;top:465px">Y</div>
<div class="cell" style="left:430px;top:465px;letter-spacing:.5px;">N/A</div>
<div class="cell" style="left:550px;top:465px;">产品型号-1</div>
<div class="cell" style="left:689px;top:465px;">产品-01</div>
<div class="cell" style="left:829px;top:465px;">产线<span style="padding:0 2px 0 1px">#</span>01</div>
<div class="cell" style="left:968px;top:465px;">乙班</div>
<div class="cell" style="left:1108px;top:465px;letter-spacing:.5px;">N/A</div>
<div class="cell" style="left:1247px;top:465px;letter-spacing:.5px;">N/A</div>
<div class="cell" style="left:1387px;top:465px;letter-spacing:.5px;">N/A</div>
<div class="a" style="left:8px;top:505px;width:36px;height:36px;background:#ff0000"></div><div class="a" style="left:17px;top:514px;width:18px;height:18px;border-radius:50%;border:2px solid #ffd800"></div>
<div class="cell" style="left:66px;top:504px;letter-spacing:1px;">1001161...</div>
<div class="cell" style="left:178px;top:504px;">外观检测</div>
<div class="cell" style="left:308px;width:113px;text-align:center;top:504px">Y</div>
<div class="cell" style="left:430px;top:504px;letter-spacing:.5px;">N/A</div>
<div class="cell" style="left:550px;top:504px;">产品型号-1</div>
<div class="cell" style="left:689px;top:504px;">产品-01</div>
<div class="cell" style="left:829px;top:504px;">产线<span style="padding:0 2px 0 1px">#</span>01</div>
<div class="cell" style="left:968px;top:504px;">甲班</div>
<div class="cell" style="left:1108px;top:504px;letter-spacing:.5px;">N/A</div>
<div class="cell" style="left:1247px;top:504px;letter-spacing:.5px;">N/A</div>
<div class="cell" style="left:1387px;top:504px;letter-spacing:.5px;">N/A</div>
</div>
<div class="a" style="left:290px;top:798px;width:758px;height:4px;border-radius:2px;background:#767676"></div>
<svg class="a" style="left:1734px;top:303px" width="9" height="12"><path d="M9 2L1 12h8z" fill="#888"/></svg>
<div class="a" style="left:1737px;top:322px;width:6px;height:124px;background:#808080"></div>
<svg class="a" style="left:1734px;top:766px" width="9" height="12"><path d="M9 10L1 0h8z" fill="#888"/></svg>
<div class="a" style="left:0;top:814px;width:256px;height:46px;background:#f2f2f4;border-top:1px solid #d8dcec"></div>
<div class="a" style="left:3px;top:822px;width:159px;height:32px;background:#fafbfc;border:1px solid #e0e0e6;border-bottom:2px solid #999;border-radius:2px"></div>
<svg width="0" height="0" style="position:absolute"><defs><linearGradient id="ubg" x1="0" y1="0" x2="0" y2="1"><stop offset="0" stop-color="#7a7a7a"/><stop offset=".45" stop-color="#8e8e8e"/><stop offset=".5" stop-color="#a8a8a8"/><stop offset="1" stop-color="#b0b0b0"/></linearGradient></defs></svg>
<svg class="a" style="left:174px;top:827px" width="21" height="21"><rect x=".75" y=".75" width="19.5" height="19.5" rx="1.5" fill="url(#ubg)" stroke="#686868" stroke-width="1.5"/><rect x="2" y="2" width="17" height="17" fill="none" stroke="#d8d4dc" stroke-width=".8"/><path d="M10.5 4.5L15.5 10H12.5v6.5h-4V10H5.5z" fill="#fff"/></svg>
<svg class="a" style="left:205px;top:827px" width="21" height="21"><rect x=".75" y=".75" width="19.5" height="19.5" rx="1.5" fill="url(#ubg)" stroke="#686868" stroke-width="1.5"/><rect x="2" y="2" width="17" height="17" fill="none" stroke="#d8d4dc" stroke-width=".8"/><path d="M10.5 16.5L15.5 11H12.5V4.5h-4V11H5.5z" fill="#fff"/></svg>
<div class="a" style="left:3px;top:857px;width:158px;height:1px;background:#d8d4e8"></div>
<div class="a" style="left:262px;top:813px;width:1481px;height:47px;background:#a9c6ee;border-top:1px solid #b0b8c8"></div>
<div class="t" style="left:266px;top:828px;font-size:18px;color:#111">控制图数量<span style="display:inline-block;width:18px;padding-left:3px;font-weight:bold">:</span>44</div>
<div class="a" style="left:1241px;top:823px;width:36px;height:31px;background:#fafbfc;border:1px solid #d8d4dc;border-radius:5px"></div>
<svg class="a" style="left:1250px;top:826px" width="25" height="25"><rect x="2.5" y="3.5" width="5" height="18" rx="2" fill="#a8d8f4" stroke="#3a6ec0" stroke-width="1.3"/><path d="M18.5 3.5L9.5 12.5l9 9z" fill="#a8d8f4" stroke="#3a6ec0" stroke-width="1.5" stroke-linejoin="round"/></svg>
<div class="a" style="left:1285px;top:823px;width:36px;height:31px;background:#fafbfc;border:1px solid #d8d4dc;border-radius:5px"></div>
<svg class="a" style="left:1292px;top:826px" width="25" height="25"><path d="M17.5 2.5L7 12.5l10.5 10z" fill="#a8d8f4" stroke="#3a6ec0" stroke-width="1.5" stroke-linejoin="round"/></svg>
<div class="a" style="left:1417px;top:823px;width:36px;height:31px;background:#fafbfc;border:1px solid #d8d4dc;border-radius:5px"></div>
<svg class="a" style="left:1424px;top:826px" width="25" height="25"><path d="M7.5 2.5L18 12.5l-10.5 10z" fill="#a8d8f4" stroke="#3a6ec0" stroke-width="1.5" stroke-linejoin="round"/></svg>
<div class="a" style="left:1460px;top:823px;width:36px;height:31px;background:#fafbfc;border:1px solid #d8d4dc;border-radius:5px"></div>
<svg class="a" style="left:1467px;top:826px" width="25" height="25"><path d="M4.5 3.5l9 9-9 9z" fill="#a8d8f4" stroke="#3a6ec0" stroke-width="1.5" stroke-linejoin="round"/><rect x="15.5" y="3.5" width="5" height="18" rx="2" fill="#a8d8f4" stroke="#3a6ec0" stroke-width="1.3"/></svg>
<div class="t" style="left:1356px;top:829px;font-size:18px;color:#111">1/1</div>
<div class="t" style="left:1523px;top:829px;font-size:18px;color:#111">跳转至<span style="display:inline-block;width:18px;padding-left:3px;font-weight:bold">:</span></div>
<div class="a" style="left:1600px;top:822px;width:84px;height:32px;background:#fafbfc;border:1px solid #d0d8e4;border-radius:2px"></div>
<div class="t" style="left:1606px;top:831px;font-size:18px;color:#111">1</div>
<svg class="a" style="left:1662px;top:833px" width="14" height="10"><path d="M1 2l6 6 6-6" stroke="#555" stroke-width="1.3" fill="none"/></svg>
<div class="a" style="left:0;top:860px;width:1743px;height:56px;background:#f4f4f6"></div>
<div class="a" style="left:10px;top:871px;width:30px;height:30px;border:2px solid #111;background:#fafafa"></div>
<div class="t" style="left:47px;top:878px;font-size:18px;color:#111">历史点未失控</div>
<div class="a" style="left:318px;top:871px;width:30px;height:30px;background:#ff0000"></div>
<div class="t" style="left:353px;top:878px;font-size:18px;color:#111">历史点未处理</div>
<div class="a" style="left:625px;top:871px;width:30px;height:30px;background:#087a1e"></div>
<div class="t" style="left:662px;top:878px;font-size:18px;color:#111">历史点已处理</div>
<div class="a" style="left:937px;top:877px;width:18px;height:18px;border-radius:50%;border:2.5px solid #444;background:#fafafa"></div>
<div class="t" style="left:968px;top:878px;font-size:18px;color:#111">最后点未失控</div>
<div class="a" style="left:1246px;top:877px;width:18px;height:18px;border-radius:50%;background:#ff0000"></div>
<div class="t" style="left:1276px;top:878px;font-size:18px;color:#111">最后点未处理</div>
<div class="a" style="left:1553px;top:877px;width:18px;height:18px;border-radius:50%;background:#087a1e"></div>
<div class="t" style="left:1585px;top:878px;font-size:18px;color:#111">最后点已处理</div>
<div class="a" style="left:0;top:916px;width:1743px;height:27px;background:linear-gradient(#dcdcdf,#eaeaee 30%,#f2f2f4);border-top:1px solid #c8ccd0;border-bottom:2px solid #111"></div>
<div class="a" style="left:240px;top:918px;width:1px;height:23px;background:#c0c0c4"></div>
<div class="a" style="left:480px;top:918px;width:1px;height:23px;background:#c0c0c4"></div>
<div class="t" style="left:-3px;width:240px;text-align:center;top:922px;font-size:18px;color:#222">admin</div>
<div class="t" style="left:240px;width:240px;text-align:center;top:922px;font-size:18px;color:#222">试用版</div>
<div class="t" style="left:515px;top:922px;font-size:18px;color:#222">当前版本<span style="display:inline-block;width:18px;padding-left:3px;font-weight:bold">:</span>4.8.4.996</div>
<div class="t" style="left:711px;top:922px;font-size:18px;color:#ff0000;text-decoration:underline">系统功能操作视频演示教学</div>
<div class="t" style="left:962px;top:922px;font-size:18px;color:#ff0000;text-decoration:underline">问题反馈</div>
<div class="t" style="left:1203px;top:922px;font-size:18px;color:#222">Quick data collection and smart data analysis</div>
</body></html>
